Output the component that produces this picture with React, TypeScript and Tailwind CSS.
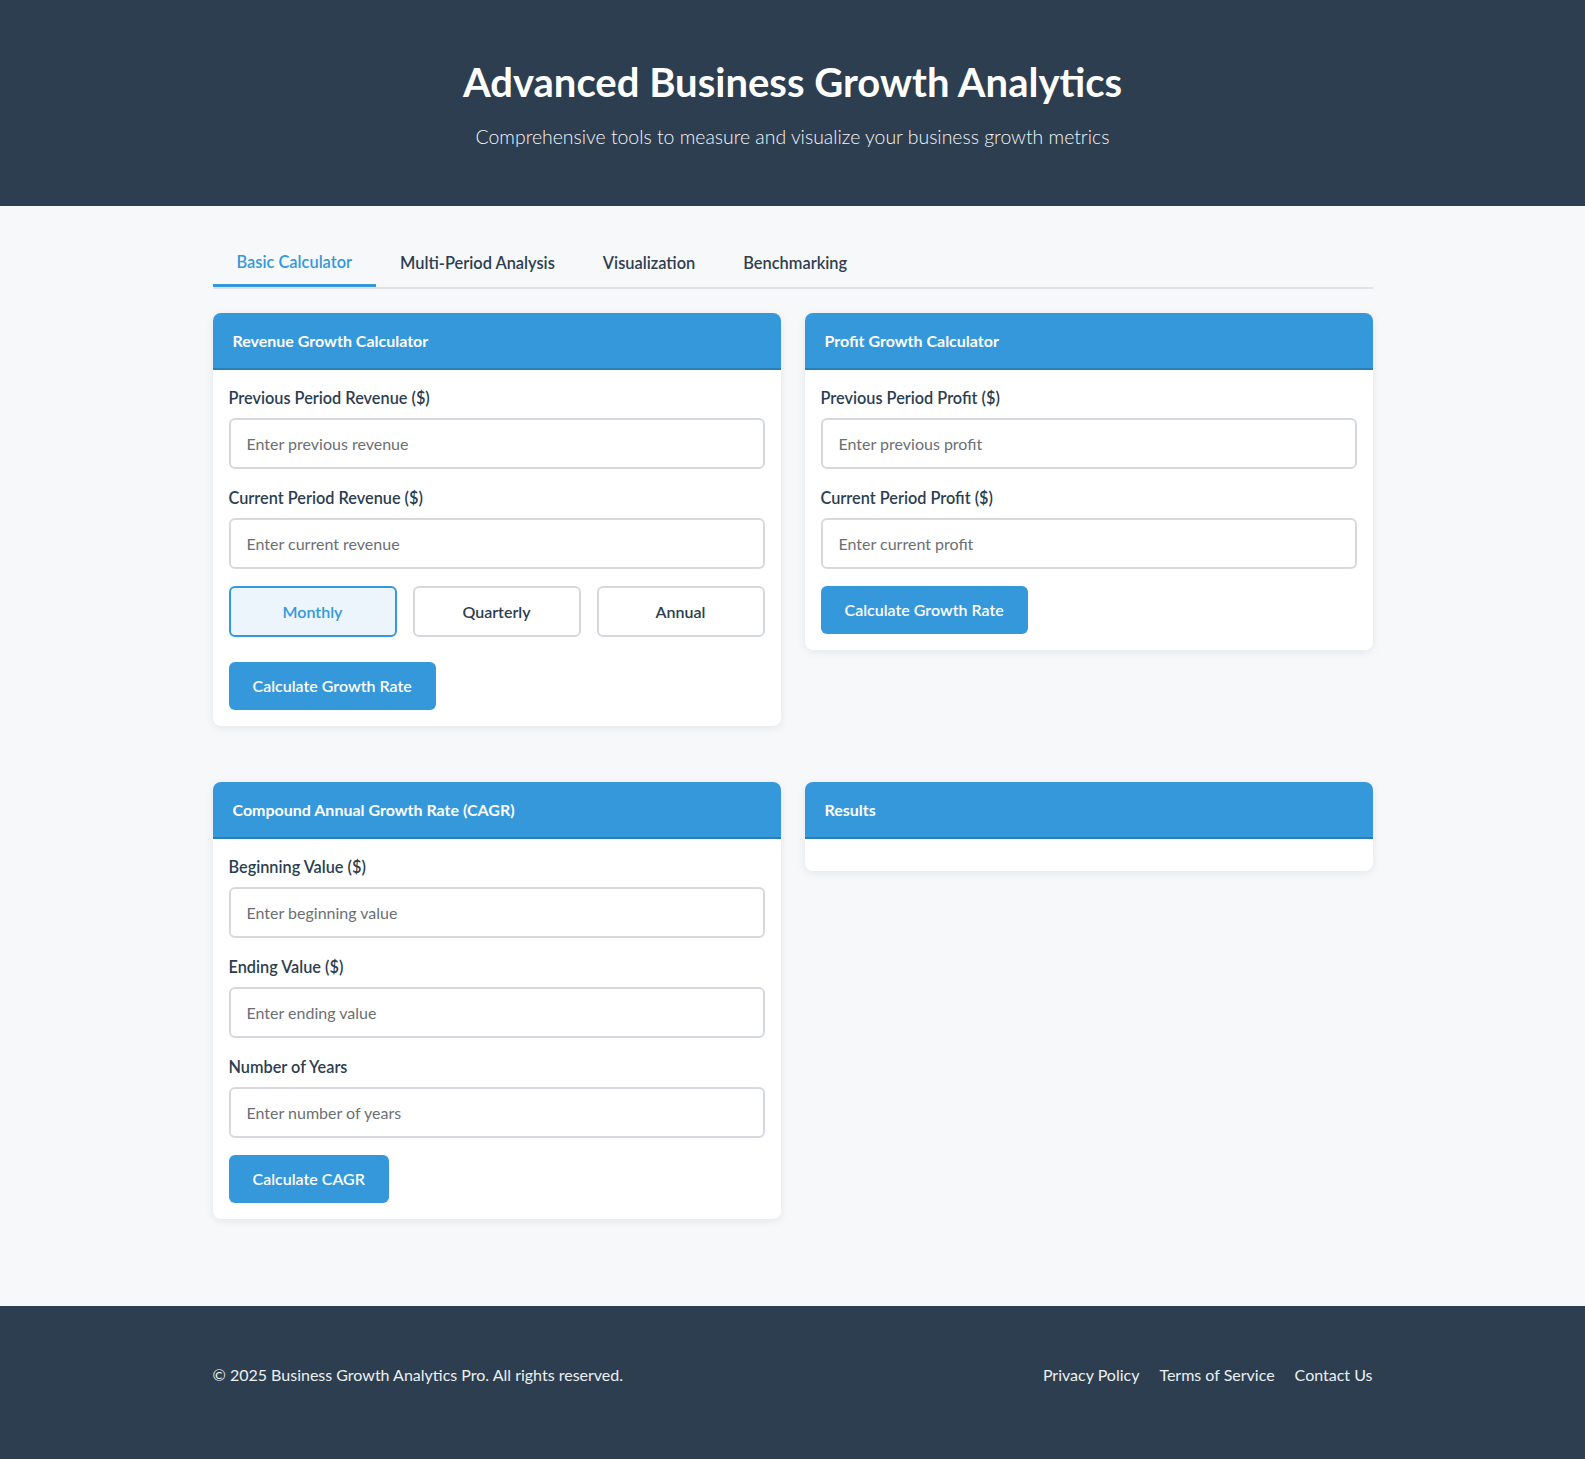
import React from "react";

const font = { fontFamily: '"Segoe UI", Lato, "Noto Sans", sans-serif' };

function Field({ label, placeholder }: { label: string; placeholder: string }) {
  return (
    <div className="mb-[17px]">
      <label className="block mb-2 text-[16.3px] leading-6 font-semibold text-[#2c3e50]">{label}</label>
      <input
        type="text"
        placeholder={placeholder}
        className="block w-full h-[51px] px-[16px] border-2 border-[#d5d9de] rounded-[6px] bg-white text-[16px] text-[#2c3e50] placeholder:text-[#6b6f75] outline-none"
      />
    </div>
  );
}

function Card({ title, children }: { title: string; children?: React.ReactNode }) {
  return (
    <div className="bg-white rounded-[8px] shadow-[0_2px_10px_rgba(0,0,0,0.08)] overflow-hidden">
      <div className="h-[57px] flex items-center px-5 bg-[#3498db] border-b-2 border-[#2980b9] text-white font-bold text-[16px]">
        {title}
      </div>
      <div className="px-4 pt-4 pb-4 min-h-[32px]">{children}</div>
    </div>
  );
}

function PrimaryButton({ children }: { children: React.ReactNode }) {
  return (
    <button className="h-[48px] px-6 rounded-[6px] bg-[#3498db] text-white font-semibold text-[16px]">{children}</button>
  );
}

export default function App() {
  return (
    <div className="min-h-screen bg-[#f7f8fa]" style={font}>
      <header className="bg-[#2c3e50] h-[206px] flex flex-col items-center text-center">
        <h1 className="mt-[56px] text-[40px] leading-[52px] font-bold text-white">Advanced Business Growth Analytics</h1>
        <p className="mt-[15px] text-[19.4px] leading-[28px] font-light text-[#f4f6f8]">
          Comprehensive tools to measure and visualize your business growth metrics
        </p>
      </header>

      <main className="w-[1160px] mx-auto pt-[30px] pb-[87px]">
        <div className="flex border-b-2 border-[#dfe3e8]">
          {["Basic Calculator", "Multi-Period Analysis", "Visualization", "Benchmarking"].map((t, i) => (
            <div
              key={t}
              className={
                i === 0
                  ? "px-[24px] h-[51px] pt-[4px] flex items-center text-[16.4px] font-semibold text-[#3498db] border-b-[3px] border-[#3498db] -mb-[2px]"
                  : "px-[24px] h-[51px] pt-[3px] flex items-center text-[16.4px] font-semibold text-[#2c3e50]"
              }
            >
              {t}
            </div>
          ))}
        </div>

        <div className="grid grid-cols-2 gap-6 mt-6 items-start">
          <Card title="Revenue Growth Calculator">
            <Field label="Previous Period Revenue ($)" placeholder="Enter previous revenue" />
            <Field label="Current Period Revenue ($)" placeholder="Enter current revenue" />
            <div className="grid grid-cols-3 gap-4 mb-[25px]">
              <button className="h-[51px] rounded-[6px] border-2 border-[#3498db] bg-[#ebf5fb] text-[#3498db] font-semibold text-[16px]">Monthly</button>
              <button className="h-[51px] rounded-[6px] border-2 border-[#d5d9de] bg-white text-[#2c3e50] font-semibold text-[16px]">Quarterly</button>
              <button className="h-[51px] rounded-[6px] border-2 border-[#d5d9de] bg-white text-[#2c3e50] font-semibold text-[16px]">Annual</button>
            </div>
            <PrimaryButton>Calculate Growth Rate</PrimaryButton>
          </Card>
          <Card title="Profit Growth Calculator">
            <Field label="Previous Period Profit ($)" placeholder="Enter previous profit" />
            <Field label="Current Period Profit ($)" placeholder="Enter current profit" />
            <PrimaryButton>Calculate Growth Rate</PrimaryButton>
          </Card>
        </div>

        <div className="grid grid-cols-2 gap-6 mt-[56px] items-start">
          <Card title="Compound Annual Growth Rate (CAGR)">
            <Field label="Beginning Value ($)" placeholder="Enter beginning value" />
            <Field label="Ending Value ($)" placeholder="Enter ending value" />
            <Field label="Number of Years" placeholder="Enter number of years" />
            <PrimaryButton>Calculate CAGR</PrimaryButton>
          </Card>
          <Card title="Results" />
        </div>
      </main>

      <footer className="bg-[#2c3e50] pt-[57px] pb-[100px]">
        <div className="w-[1160px] mx-auto flex justify-between items-center text-[16px] leading-6 text-[#ecf0f1]">
          <span>© 2025 Business Growth Analytics Pro. All rights reserved.</span>
          <div className="flex gap-5">
            <span>Privacy Policy</span>
            <span>Terms of Service</span>
            <span>Contact Us</span>
          </div>
        </div>
      </footer>
    </div>
  );
}
